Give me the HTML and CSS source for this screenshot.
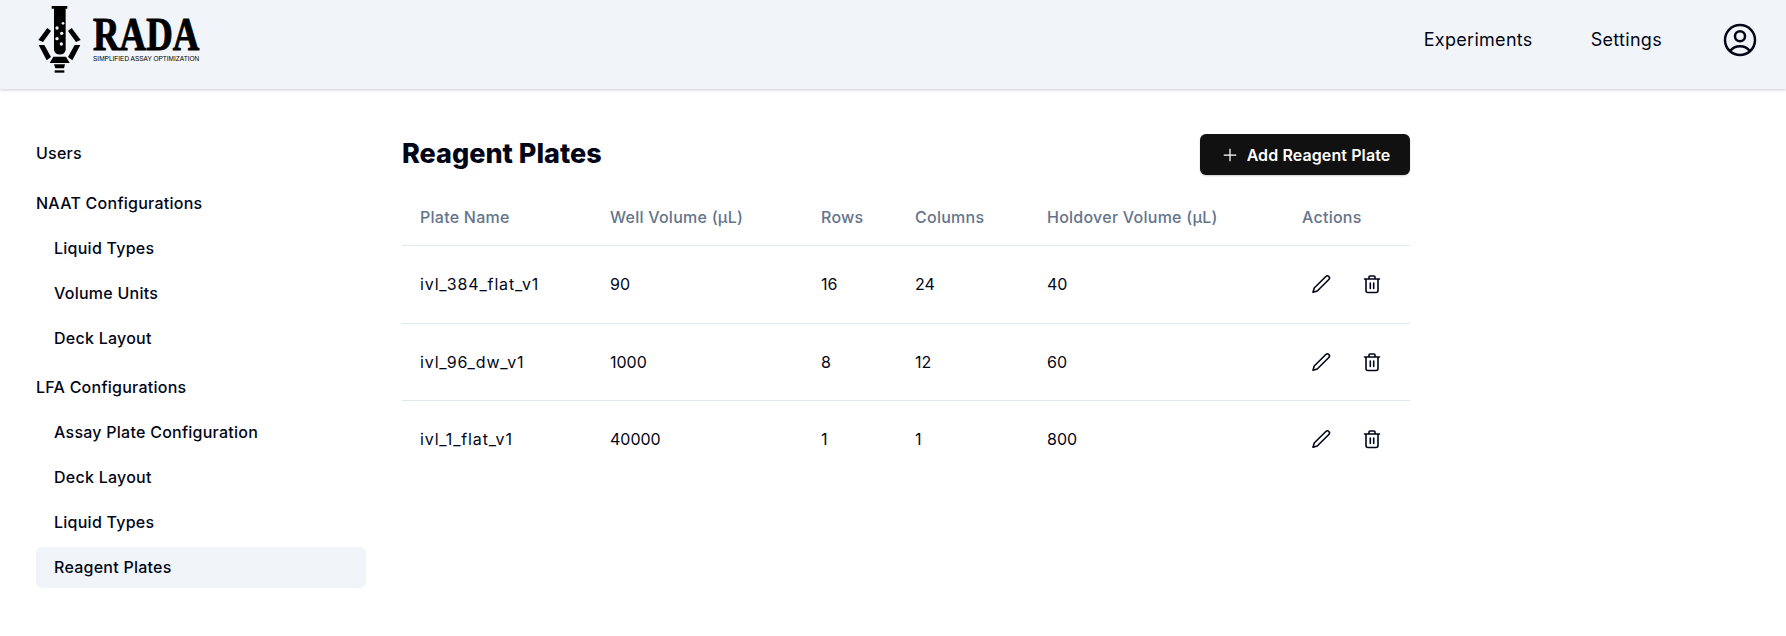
FILE: index.html
```html
<!DOCTYPE html>
<html lang="en">
<head>
    <meta charset="UTF-8">
    <title>RADA - Reagent Plates</title>
    <link rel="stylesheet" href="styles.css">
</head>
<body>
    <header class="topbar">
        <div class="brand">
            <svg class="brand-mark" viewBox="0 0 180 240" width="60" height="80">
                <path d="M65 18h47v8h-5v124a18 18 0 0 1-35 0V26h-7z"/>
                <g fill="#f1f5f9">
                    <circle cx="99" cy="70" r="4"/>
                    <circle cx="81" cy="84" r="5"/>
                    <circle cx="95" cy="100" r="5"/>
                    <circle cx="81" cy="116" r="5"/>
                    <circle cx="94" cy="132" r="5"/>
                </g>
                <path d="M25 120l27-36 11 9-24 33z"/>
                <path d="M26 135h17l20 36-13 10z"/>
                <path d="M152 120l-27-36-11 9 24 33z"/>
                <path d="M151 135h-17l-20 36 13 10z"/>
                <path d="M70 170h38l11 19H59z"/>
                <path d="M72 193h33l-3 12H76z"/>
                <path d="M74 211h29v7H74z"/>
            </svg>
            <div class="brand-text">
                <div class="brand-name">RADA</div>
                <div class="brand-tag">SIMPLIFIED ASSAY OPTIMIZATION</div>
            </div>
        </div>
        <nav class="topnav">
            <a href="#">Experiments</a>
            <a href="#">Settings</a>
            <svg class="account" viewBox="0 0 24 24" width="40" height="40" fill="none" stroke="#020617" stroke-width="1.5">
                <path d="M17.982 18.725A7.488 7.488 0 0 0 12 15.75a7.488 7.488 0 0 0-5.982 2.975m11.964 0a9 9 0 1 0-11.963 0m11.963 0A8.966 8.966 0 0 1 12 21a8.966 8.966 0 0 1-5.982-2.275M15 9.75a3 3 0 1 1-6 0 3 3 0 0 1 6 0Z"/>
            </svg>
        </nav>
    </header>

    <div class="layout">
        <aside class="sidebar">
            <a class="side-top first" href="#">Users</a>
            <a class="side-top" href="#">NAAT Configurations</a>
            <a class="side-sub" href="#">Liquid Types</a>
            <a class="side-sub" href="#">Volume Units</a>
            <a class="side-sub" href="#">Deck Layout</a>
            <a class="side-top" href="#">LFA Configurations</a>
            <a class="side-sub" href="#">Assay Plate Configuration</a>
            <a class="side-sub" href="#">Deck Layout</a>
            <a class="side-sub" href="#">Liquid Types</a>
            <a class="side-sub active" href="#">Reagent Plates</a>
        </aside>

        <main class="content">
            <div class="content-head">
                <h1>Reagent Plates</h1>
                <button class="add-btn">
                    <svg viewBox="0 0 24 24" width="20" height="20" fill="none" stroke="#fff" stroke-width="1.5"><path d="M12 4.5v15m7.5-7.5h-15"/></svg>
                    Add Reagent Plate
                </button>
            </div>

            <table class="plates">
                <thead>
                    <tr>
                        <th class="c-name">Plate Name</th>
                        <th class="c-well">Well Volume (µL)</th>
                        <th class="c-rows">Rows</th>
                        <th class="c-cols">Columns</th>
                        <th class="c-hold">Holdover Volume (µL)</th>
                        <th>Actions</th>
                    </tr>
                </thead>
                <tbody id="plateBody"></tbody>
            </table>
        </main>
    </div>

    <script>
        const plates = [
            { name: "ivl_384_flat_v1", well: 90, rows: 16, cols: 24, hold: 40 },
            { name: "ivl_96_dw_v1", well: 1000, rows: 8, cols: 12, hold: 60 },
            { name: "ivl_1_flat_v1", well: 40000, rows: 1, cols: 1, hold: 800 }
        ];

        const editIcon = `<svg viewBox="0 0 24 24" width="24" height="24" fill="none" stroke="#020617" stroke-width="1.6" stroke-linecap="round" stroke-linejoin="round"><path d="M16.86 4.49a2.1 2.1 0 0 1 2.97 2.97L8.25 19.05 4 20.25l1.2-4.25z"/></svg>`;
        const trashIcon = `<svg viewBox="0 0 24 24" width="24" height="24" fill="none" stroke="#020617" stroke-width="1.6" stroke-linecap="round" stroke-linejoin="round"><path d="M4.5 7h15M9 7V5a1 1 0 0 1 1-1h4a1 1 0 0 1 1 1v2M6 7v11.5a2 2 0 0 0 2 2h8a2 2 0 0 0 2-2V7M10.3 11v5.5M13.7 11v5.5"/></svg>`;

        const tbody = document.getElementById("plateBody");
        plates.forEach(p => {
            const row = document.createElement("tr");
            row.innerHTML = `
                <td class="plate-name">${p.name}</td>
                <td>${p.well}</td>
                <td>${p.rows}</td>
                <td>${p.cols}</td>
                <td>${p.hold}</td>
                <td><div class="actions">${editIcon}${trashIcon}</div></td>
            `;
            tbody.appendChild(row);
        });
    </script>
</body>
</html>
```

FILE: styles.css
```css
* { box-sizing: border-box; }
body { margin: 0; font-family: Inter, "Liberation Sans", sans-serif; color: #020617; background: #fff; }
a { color: inherit; text-decoration: none; }

.topbar { height: 89px; padding: 0 26px 10px 30px; display: flex; justify-content: space-between; align-items: center; background: #f1f5f9; box-shadow: 0 1px 3px rgba(0, 0, 0, 0.2); }
.brand { display: flex; align-items: flex-start; height: 80px; align-self: flex-start; }
.brand-mark { display: block; }
.brand-text { margin: 16px 0 0 3px; }
.brand-name { font-family: "Liberation Serif", serif; font-weight: 700; font-size: 46px; line-height: 38px; -webkit-text-stroke: 1px #000; color: #000; transform: scaleX(0.8); transform-origin: left; }
.brand-tag { font-family: "Liberation Sans", sans-serif; font-size: 6.5px; line-height: 8px; margin-top: 1px; color: #000; white-space: nowrap; }
.topnav { display: flex; align-items: center; gap: 58px; font-size: 18px; letter-spacing: 0.3px; }

.layout { display: flex; padding: 42px 0 0 36px; }
.sidebar { width: 330px; display: flex; flex-direction: column; font-size: 16px; font-weight: 500; letter-spacing: 0.25px; }
.side-top { height: 41px; line-height: 41px; margin-top: 9px; }
.side-top.first { margin-top: 2px; }
.side-sub + .side-top { margin-top: 8px; }
.side-sub { height: 41px; line-height: 41px; padding-left: 18px; margin-top: 4px; border-radius: 6px; }
.side-sub.active { background: #f1f5f9; }

.content { width: 1008px; margin-left: 36px; }
.content-head { height: 59px; padding-top: 2px; display: flex; justify-content: space-between; align-items: flex-start; }
h1 { margin: 0; font-size: 27px; line-height: 41px; font-weight: 800; color: #020617; }
.add-btn { width: 210px; height: 41px; margin-top: 1px; display: flex; align-items: center; justify-content: center; gap: 7px; border: none; border-radius: 6px; background: #111; color: #fff; font: 600 16px Inter, sans-serif; letter-spacing: 0.1px; box-shadow: 0 1px 2px rgba(0, 0, 0, 0.2); }

.plates { width: 100%; border-collapse: collapse; table-layout: fixed; font-size: 16px; }
.plates th { height: 55px; padding: 0 18px; text-align: left; font-weight: 500; letter-spacing: 0.25px; color: #64748b; border-bottom: 1px solid #e2e8f0; }
.plates td { height: 77px; padding: 0 18px; border-bottom: 1px solid #e2e8f0; }
.plates tbody tr:first-child td { height: 78px; }
.plates tbody tr:last-child td { border-bottom: none; }
.plates .plate-name { letter-spacing: 0.85px; }
.c-name { width: 190px; }
.c-well { width: 211px; }
.c-rows { width: 94px; }
.c-cols { width: 132px; }
.c-hold { width: 255px; }
.actions { display: flex; gap: 27px; padding-left: 7px; align-items: center; }
.actions svg { display: block; }
```
